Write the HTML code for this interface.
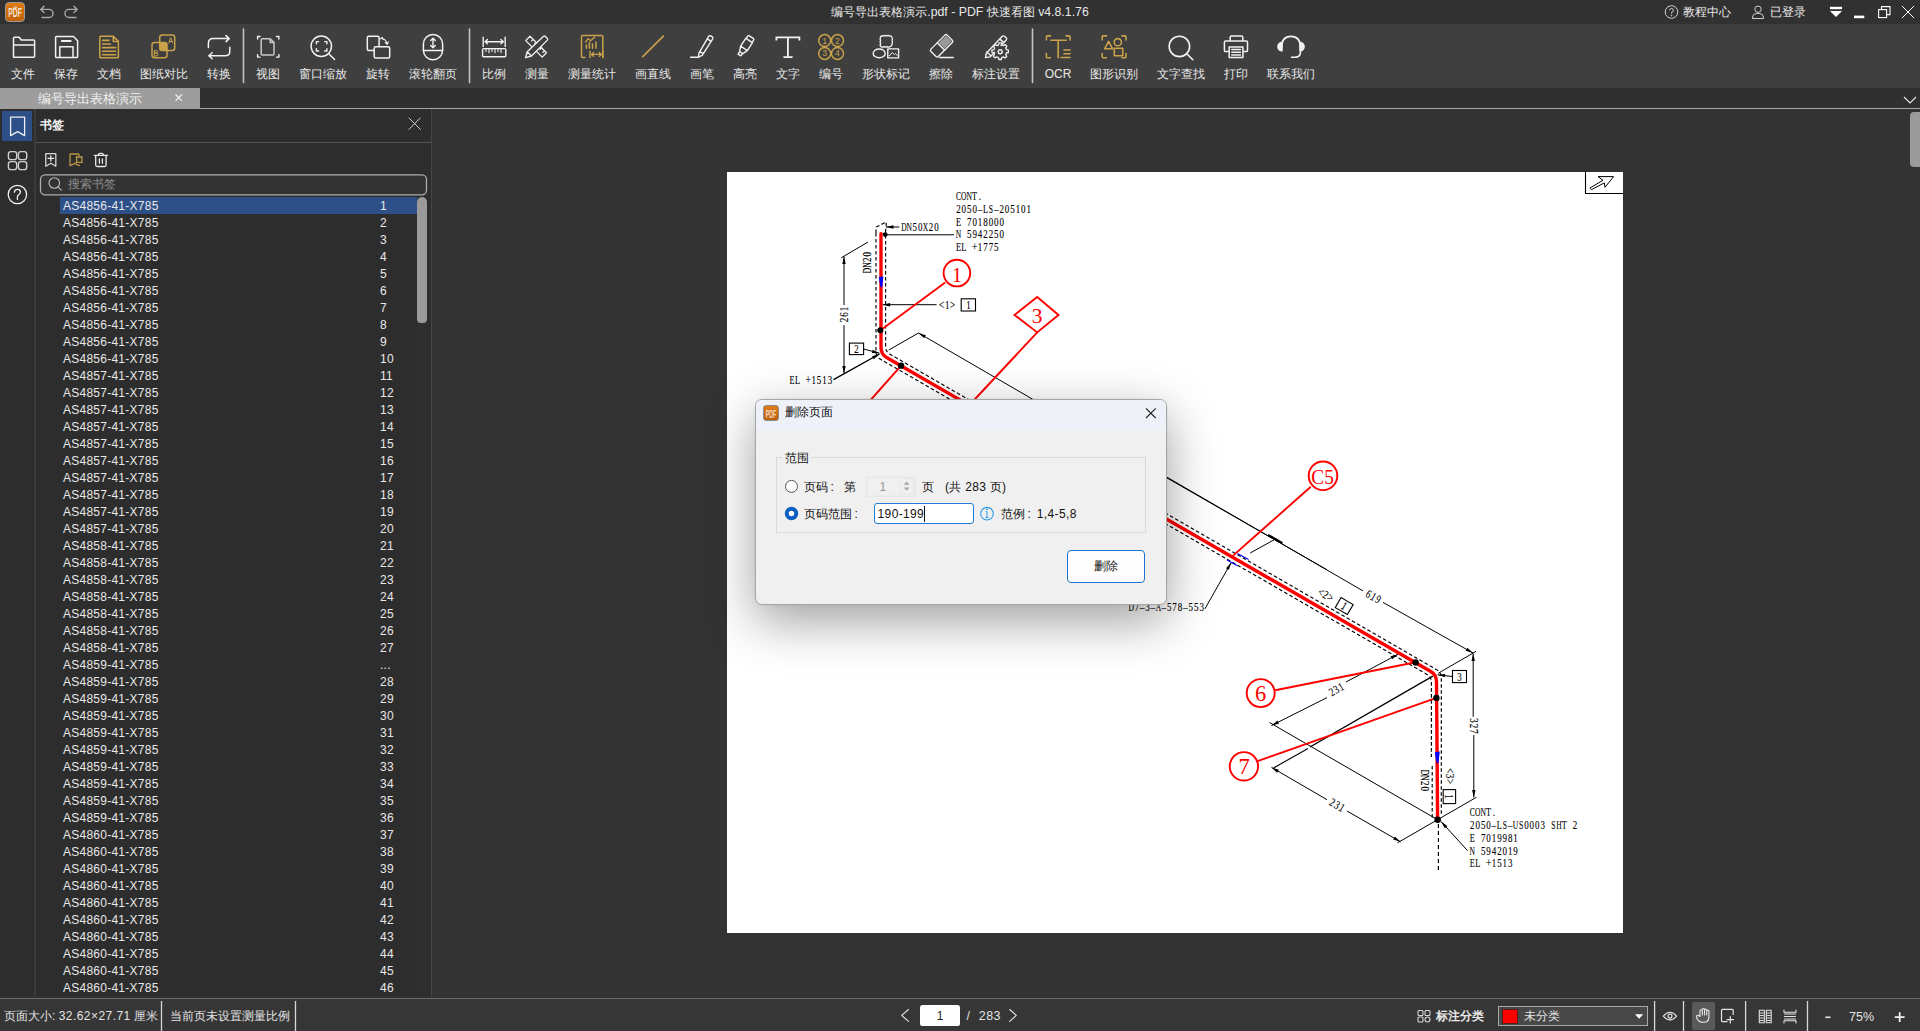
<!DOCTYPE html>
<html><head><meta charset="utf-8">
<style>
*{box-sizing:border-box;margin:0;padding:0}
html,body{width:1920px;height:1031px;overflow:hidden;background:#333333;font-family:"Liberation Sans",sans-serif;color:#e6e6e6}
.a{position:absolute}
#title{left:0;top:0;width:1920px;height:24px;background:#313131}
#tb{left:0;top:24px;width:1920px;height:64px;background:#3f3f3f}
#tabbar{left:0;top:88px;width:1920px;height:20px;background:#303030}
#tabline{left:0;top:108px;width:1920px;height:1px;background:#a8a8a8}
#rail{left:0;top:109px;width:34px;height:887px;background:#2d2d2d}
#railsep{left:34px;top:109px;width:2px;height:887px;background:#3a3a3a}
#panel{left:36px;top:109px;width:395px;height:887px;background:#2d2d2d}
#panelsep{left:431px;top:109px;width:1px;height:887px;background:#454545}
#main{left:432px;top:109px;width:1488px;height:889px;background:#333333}
#status{left:0;top:998px;width:1920px;height:33px;background:#363636;border-top:1px solid #686868}
.lbl{font-size:12px;line-height:14px;top:67px;white-space:nowrap;text-align:center;color:#e8e8e8}
.bm{font-size:12px;line-height:17px;height:17px;left:63px;letter-spacing:0.25px;padding-top:1px;white-space:nowrap;color:#e8e8e8}
.bn{font-size:12px;line-height:17px;height:17px;left:380px;letter-spacing:0.25px;padding-top:1px;white-space:nowrap;color:#e8e8e8}
</style></head><body>
<div id="title" class="a"></div>
<div id="tb" class="a"></div>
<div id="tabbar" class="a"></div>
<div id="tabline" class="a"></div>
<div id="rail" class="a"></div>
<div id="railsep" class="a"></div>
<div id="panel" class="a"></div>
<div id="panelsep" class="a"></div>
<div id="main" class="a"></div>
<div class="a" style="left:0;top:996px;width:432px;height:2px;background:#323232"></div>
<div id="status" class="a"></div>
<div class="a" style="left:5px;top:2px;width:20px;height:20px;border-radius:4px;background:linear-gradient(#e07a10,#c0600a);border:1px solid #9a9a9a"></div>
<svg class="a" style="left:5px;top:2px" width="20" height="20" viewBox="0 0 20 20"><text x="10.1" y="14.9" text-anchor="middle" font-family="Liberation Sans,sans-serif" font-weight="bold" font-size="12.5" textLength="13.6" lengthAdjust="spacingAndGlyphs" fill="#f2e4d6">PDF</text><path d="M8.6 5.6 Q10.3 4.4 12 5.6" stroke="#e8d8c8" stroke-width="1.1" fill="none"/></svg>
<svg class="a" style="left:36px;top:3px" width="48" height="18" viewBox="36 3 48 18" fill="none" stroke="#a9a9a9" stroke-width="1.4" stroke-linecap="round">
<path d="M44 6.2 L40.8 9.4 L44 12.4 M41 9.4 H49 A4 4 0 0 1 49 17.5 H42"/>
<path d="M74 6.2 L77.2 9.4 L74 12.4 M77 9.4 H69 A4 4 0 0 0 69 17.5 H76"/>
</svg>
<div class="a" id="ttl" style="left:760px;top:4px;width:400px;text-align:center;font-size:12.3px;line-height:16px;color:#e8e8e8;white-space:nowrap">编号导出表格演示.pdf - PDF 快速看图 v4.8.1.76</div>
<svg class="a" style="left:1664px;top:4px" width="16" height="16" viewBox="0 0 16 16" fill="none" stroke="#cfcfcf" stroke-width="1"><circle cx="7.5" cy="8" r="6.3"/><path d="M5.6 6.3 A1.9 1.9 0 1 1 7.5 8.3 V9.6" /><circle cx="7.5" cy="11.6" r="0.4" fill="#cfcfcf"/></svg>
<div class="a" style="left:1683px;top:4px;font-size:12px;line-height:16px;color:#e8e8e8;white-space:nowrap">教程中心</div>
<svg class="a" style="left:1750px;top:4px" width="16" height="16" viewBox="0 0 16 16" fill="none" stroke="#cfcfcf" stroke-width="1"><circle cx="8" cy="5.2" r="3.2"/><path d="M2.5 14.5 V13 A4 4 0 0 1 6.5 9.5 H9.5 A4 4 0 0 1 13.5 13 V14.5 Z"/></svg>
<div class="a" style="left:1770px;top:4px;font-size:12px;line-height:16px;color:#e8e8e8;white-space:nowrap">已登录</div>
<svg class="a" style="left:1826px;top:0" width="94" height="24" viewBox="1826 0 94 24">
<rect x="1830" y="6.8" width="12" height="2.4" fill="#fff"/>
<path d="M1830 11 H1842 L1836 17 Z" fill="#fff"/>
<rect x="1854" y="15.6" width="10.3" height="2.6" fill="#fff"/>
<g fill="none" stroke="#fff" stroke-width="1.1"><path d="M1881.5 9 V6.6 H1890 V14.6 H1887"/><rect x="1878.6" y="9.6" width="8" height="8"/></g>
<path d="M1902 6 L1914 18 M1914 6 L1902 18" stroke="#fff" stroke-width="1"/>
</svg>
<svg class="a" style="left:0;top:24px" width="1400" height="64" viewBox="0 24 1400 64" fill="none" stroke="#f2f2f2" stroke-width="1.5" stroke-linejoin="round" stroke-linecap="round">
<g stroke="#c4c4c4" stroke-width="1.6"><path d="M243.5 29 V82.5 M469.5 29 V82.5 M1032.5 29 V82.5"/></g>
<!-- folder -->
<path d="M13.5 57.2 V38.3 Q13.5 37.3 14.5 37.3 H19.2 L21.2 40 H33.5 Q34.6 40 34.6 41 V56.2 Q34.6 57.2 33.5 57.2 H14.5 Q13.5 57.2 13.5 56.2 Z M13.5 45 H34.6"/>
<!-- save -->
<path d="M55.6 37.5 Q55.6 36.6 56.5 36.6 H73.5 L77.6 40.8 V56.7 Q77.6 57.6 76.7 57.6 H56.5 Q55.6 57.6 55.6 56.7 Z M59.8 57.6 V46.8 H73 V57.6"/>
<path d="M61.8 41 H70.7" stroke-width="2"/>
<!-- doc gold -->
<g stroke="#c9a24a"><path d="M99.8 37.2 Q99.8 36.3 100.7 36.3 H113.3 L118.4 41.4 V56.9 Q118.4 57.8 117.5 57.8 H100.7 Q99.8 57.8 99.8 56.9 Z M113.3 36.3 V41.4 H118.4"/>
<path d="M102.6 40.4 H109 M102.6 44 H110.5 M102.6 47.6 H115.6 M102.6 51.2 H115.6 M102.6 54.7 H115.6" stroke-width="1.6"/>
<!-- compare -->
<rect x="159.7" y="35" width="15" height="15.4" rx="2.5"/>
<rect x="152" y="42.6" width="15" height="15.2" rx="2.5"/>
<rect x="159.7" y="42.6" width="7.3" height="7.8" fill="#c9a24a" stroke="none"/>
<path d="M168.8 43 L170.7 37.8 L172.6 43 M169.4 41.5 H172" stroke-width="1"/>
<path d="M154.3 56 V50.5 H156 Q157.6 50.5 157.6 51.8 Q157.6 53.1 156 53.1 H154.3 H156.2 Q158 53.1 158 54.6 Q158 56 156.2 56 Z" stroke-width="1"/>
<!-- stats -->
<path d="M585 57.5 H582.5 Q581.5 57.5 581.5 56.5 V36.5 Q581.5 35.5 582.5 35.5 H601.8 Q602.8 35.5 602.8 36.5 V57.5"/>
<path d="M585.5 42 L588.3 38.6 L590.5 40.8 L594.8 37" stroke-width="1.3"/>
<path d="M586.4 45 V48.2 M589.4 42.6 V48.2 M592.5 44 V48.2 M596 42 V48.2" stroke-width="1.5"/>
<path d="M590 51.2 V57.6 M602.8 51.2 V57.6 M591.5 54.4 H601.3 M593.5 52.5 L591.5 54.4 L593.5 56.3 M599.3 52.5 L601.3 54.4 L599.3 56.3" stroke-width="1.4"/>
<!-- line -->
<path d="M642.8 56.6 L663.3 36.1" stroke-width="1.7"/>
</g>
<!-- convert -->
<path d="M208.4 47.5 V43.4 Q208.4 38.6 213.2 38.6 H229 M226 35.6 L229.2 38.6 L226 41.6 M229.8 47.2 V51.2 Q229.8 55.8 225 55.8 H209 M212.2 52.8 L208.8 55.8 L212.2 58.8" stroke-width="1.5"/>
<!-- view -->
<path d="M260 36.5 H257.6 V39 M276.5 36.5 H278.9 V39 M257.6 54.6 V57.1 H260 M278.9 54.6 V57.1 H276.5" stroke-width="1.4"/>
<path d="M261.2 39.8 Q261.2 38.8 262.2 38.8 H270.2 L274 42.6 V54 Q274 55 273 55 H262.2 Q261.2 55 261.2 54 Z M270.2 38.8 V42.6 H274" stroke="#c8c8c8" stroke-width="1.5"/>
<!-- zoom window -->
<circle cx="321.3" cy="46.3" r="10.2" stroke-width="1.5"/>
<path d="M328.7 53.7 L334.6 59.5" stroke-width="1.5"/>
<path d="M316.4 43.8 V41.6 H318.6 M324.7 41.6 H326.9 V43.8 M316.4 48.8 V51 H318.6 M324.7 51 H326.9 V48.8" stroke-width="1.4"/>
<!-- rotate -->
<rect x="367.3" y="36.3" width="11.8" height="14.3" rx="1.5" stroke-width="1.5"/>
<rect x="374.2" y="46.7" width="15.5" height="11.3" rx="1.5" stroke-width="1.5" fill="#3f3f3f"/>
<path d="M381.8 38.2 Q385.6 39 387 43.4 M380.6 38.8 L382.2 37.3 L383.1 39.5 M385.3 42.6 L387.2 44.3 L388.3 41.9" stroke-width="1.1"/>
<!-- mouse -->
<rect x="423.4" y="34.4" width="19.2" height="25.4" rx="9.6" stroke-width="1.5"/>
<path d="M423.4 50.5 H442.6" stroke-width="1.5"/>
<path d="M433 38.6 V47.4 M430.7 40.6 L433 38.3 L435.3 40.6 M430.7 45.4 L433 47.7 L435.3 45.4" stroke-width="1.4"/>
<!-- scale -->
<path d="M483.2 37.3 V46.4 M505.2 37.3 V46.4 M485 41.7 H503.4 M487.4 39.6 L485.2 41.7 L487.4 43.8 M501 39.6 L503.2 41.7 L501 43.8" stroke-width="1.4"/>
<rect x="482.6" y="48.6" width="23.2" height="8.2" rx="1" stroke-width="1.4"/>
<path d="M486 48.6 V51.5 M489 48.6 V52.8 M492 48.6 V51.5 M495 48.6 V52.8 M498 48.6 V51.5 M501 48.6 V52.8" stroke-width="1.1"/>
<!-- measure -->
<path d="M530 36.3 L525.7 40.6 L542.2 57.1 L546.5 52.8 Z M531.6 40.9 L533.2 39.3 M534.6 43.9 L536.2 42.3 M540 49.3 L541.6 47.7 M543 52.3 L544.6 50.7" stroke-width="1.3"/>
<path d="M543.6 36.3 Q544.4 35.6 545.2 36.3 L547.4 38.5 Q548.1 39.3 547.4 40.1 L531.5 56 L525.5 57.7 L527.2 51.7 Z M527.2 51.7 L531.5 56" stroke-width="1.3" fill="#3f3f3f"/>
<!-- pen -->
<path d="M708.8 36.2 Q710 35.4 711.2 36.1 L712.3 36.8 Q713.3 37.6 712.7 38.8 L702.2 55.4 L698.6 57.2 L698.8 53.3 Z M699.6 51.6 L703.3 53.7 M707.2 38.9 L710.9 41.1 M690.6 57.3 H698.6" stroke-width="1.4"/>
<!-- highlighter -->
<g transform="translate(745.4 46.2) rotate(33) translate(0 -10.8)" stroke-width="1.4"><rect x="-3.6" y="0" width="7.2" height="4" rx="1.2"/><path d="M-4 4 V13.4 L-1.9 18.4 H1.9 L4 13.4 V4 M-4 13.4 H4 M-1.9 18.4 V21.4 H1.3 L1.9 18.4"/></g>
<!-- T -->
<path d="M776.4 40.6 V37.3 H799.4 V40.6 M787.9 37.3 V57.2 M783.4 57.2 H792.6" stroke-width="1.8" stroke-linejoin="miter" stroke-linecap="butt"/>
<!-- numbers gold -->
<g stroke="#c9a24a" stroke-width="1.5"><circle cx="824.7" cy="40.6" r="6"/><circle cx="837.5" cy="40.6" r="6"/><circle cx="824.7" cy="53.4" r="6"/><circle cx="837.5" cy="53.4" r="6"/></g>
<g fill="#c9a24a" stroke="none" font-family="Liberation Sans,sans-serif" font-size="8.6" text-anchor="middle"><text x="824.7" y="43.6">1</text><text x="837.5" y="43.6">2</text><text x="824.7" y="56.4">3</text><text x="837.5" y="56.4">4</text></g>
<!-- shapes -->
<path d="M880.5 37 Q882 35.2 883.5 36 Q885 35 886.5 36 Q888 35 889.5 36 Q891.5 35.5 892 37.5 Q893 39 892 40.5 Q893 42 892 43.5 Q892.5 46 890 46.6 Q888.5 47.5 887 46.6 Q885.5 47.5 884 46.6 Q882.5 47.5 881 46.6 Q879.5 45.5 880.6 43.5 Q879.5 42 880.6 40.5 Q879.5 39 880.5 37 Z" stroke-width="1.3"/>
<ellipse cx="879.2" cy="53.4" rx="6" ry="4.4" stroke-width="1.4"/>
<rect x="887.8" y="48.9" width="10.8" height="9" stroke-width="1.4"/>
<path d="M889.5 55.8 L892.2 52.5 L894.4 54.6 L895.5 53.5 L897.2 55.5" stroke-width="1"/>
<!-- eraser -->
<g transform="translate(941.6 45.8) rotate(-45) translate(-11.5 -5.2)" stroke-width="1.4"><rect x="0" y="0" width="23" height="10.4" rx="1.6"/><path d="M10.5 0 V10.4"/><rect x="11.6" y="1.2" width="10.2" height="8" fill="#9a9a9a" stroke="none"/></g>
<path d="M939.5 57.4 H953.2" stroke-width="1.5"/>
<!-- annot settings -->
<path d="M1002.3 36.3 Q1003.4 35.4 1004.5 36.3 L1006.2 37.8 Q1007.2 38.8 1006.3 39.9 L1001 45.5 M994.6 52.2 L990 56.9 L985.5 57.6 L986.3 53.2 L1002.3 36.3 M999.6 38.9 L1003.6 42.4 M986.8 52 L990.4 55.3" stroke-width="1.4"/>
<circle cx="1000.2" cy="51.8" r="2" stroke-width="1.4"/>
<path d="M999 45.4 H1001.4 L1001.9 47.3 L1003.6 48.1 L1005.2 47 L1006.9 48.7 L1005.8 50.4 L1006.5 52.2 L1008.4 52.7 V55 L1006.4 55.5 L1005.7 57.2 L1006.8 58.8 L1005.1 60.5 L1003.4 59.4 L1001.7 60.1 L1001.3 62 H998.9 L998.4 60 L996.8 59.3 L995.1 60.4 L993.4 58.7 L994.5 57 L993.8 55.4 L991.9 54.9 V52.6 L993.8 52.2 L994.6 50.5 L993.5 48.8 L995.2 47.1 L996.9 48.2 L998.5 47.4 Z" stroke-width="1.3" transform="translate(0 -2.5) scale(1) "/>
<!-- OCR gold -->
<g stroke="#c9a24a" stroke-width="1.6">
<path d="M1050.5 35.9 H1047.5 Q1046.4 35.9 1046.4 37 V40 M1066 35.9 H1069 Q1070 35.9 1070 37 V40 M1046.4 53.5 V56.8 Q1046.4 57.8 1047.5 57.8 H1050.5"/>
<path d="M1050.8 40.3 H1066.2 M1058.2 40.3 V57.8 M1064 50 H1070 M1064 53.7 H1070 M1061 57.5 H1070"/>
<!-- shape recog -->
<path d="M1106.5 35.9 H1103.2 Q1102.2 35.9 1102.2 37 V40 M1122 35.9 H1125 Q1126 35.9 1126 37 V40 M1102.2 53.5 V56.8 Q1102.2 57.8 1103.2 57.8 H1106.5 M1122 57.8 H1125 Q1126 57.8 1126 56.8 V53.5"/>
<circle cx="1117.8" cy="42.2" r="3.6"/>
<path d="M1108.6 41.4 L1112.6 48.8 H1104.6 Z"/>
<rect x="1114.3" y="48.2" width="8.4" height="7.6"/>
</g>
<!-- search -->
<circle cx="1179.4" cy="46.4" r="10.2" stroke-width="1.6"/>
<path d="M1186.8 53.8 L1192.8 59.7" stroke-width="1.6"/>
<!-- print -->
<path d="M1230.2 41 V37.3 Q1230.2 36.1 1231.4 36.1 H1241.6 Q1242.8 36.1 1242.8 37.3 V41 M1228.5 51.6 H1225.6 Q1224.4 51.6 1224.4 50.4 V42.3 Q1224.4 41 1225.7 41 H1246.2 Q1247.5 41 1247.5 42.3 V50.4 Q1247.5 51.6 1246.3 51.6 H1243.1 M1229.2 47 H1242.9 V57.6 H1229.2 Z M1231.8 49.5 H1240.4 M1231.8 52.3 H1240.4 M1231.8 55 H1240.4" stroke-width="1.5"/>
<!-- headset -->
<path d="M1281.5 48 Q1281.5 36.4 1291 36.4 Q1300.5 36.4 1300.5 48 V52 Q1300.5 57.2 1295 57.2 H1291.5" stroke-width="1.6"/>
<path d="M1282 42.6 A4 4 0 0 0 1282 50.8 Z M1300 42.6 A4 4 0 0 1 1300 50.8 Z" fill="#f2f2f2"/>
</svg>
<div class="a lbl" style="left:3px;width:40px">文件</div>
<div class="a lbl" style="left:46px;width:40px">保存</div>
<div class="a lbl" style="left:89px;width:40px">文档</div>
<div class="a lbl" style="left:134px;width:60px">图纸对比</div>
<div class="a lbl" style="left:199px;width:40px">转换</div>
<div class="a lbl" style="left:248px;width:40px">视图</div>
<div class="a lbl" style="left:293px;width:60px">窗口缩放</div>
<div class="a lbl" style="left:358px;width:40px">旋转</div>
<div class="a lbl" style="left:403px;width:60px">滚轮翻页</div>
<div class="a lbl" style="left:474px;width:40px">比例</div>
<div class="a lbl" style="left:517px;width:40px">测量</div>
<div class="a lbl" style="left:562px;width:60px">测量统计</div>
<div class="a lbl" style="left:623px;width:60px">画直线</div>
<div class="a lbl" style="left:682px;width:40px">画笔</div>
<div class="a lbl" style="left:725px;width:40px">高亮</div>
<div class="a lbl" style="left:768px;width:40px">文字</div>
<div class="a lbl" style="left:811px;width:40px">编号</div>
<div class="a lbl" style="left:856px;width:60px">形状标记</div>
<div class="a lbl" style="left:921px;width:40px">擦除</div>
<div class="a lbl" style="left:966px;width:60px">标注设置</div>
<div class="a lbl" style="left:1038px;width:40px">OCR</div>
<div class="a lbl" style="left:1084px;width:60px">图形识别</div>
<div class="a lbl" style="left:1151px;width:60px">文字查找</div>
<div class="a lbl" style="left:1216px;width:40px">打印</div>
<div class="a lbl" style="left:1261px;width:60px">联系我们</div>
<div class="a" style="left:0;top:88px;width:200px;height:21px;background:#9d9d9d"></div>
<div class="a" style="left:38px;top:91px;font-size:13px;line-height:15px;color:#f0f0f0;white-space:nowrap">编号导出表格演示</div>
<svg class="a" style="left:174px;top:93px" width="10" height="10" viewBox="0 0 10 10"><path d="M1.5 1.5 L7.8 7.8 M7.8 1.5 L1.5 7.8" stroke="#f4f4f4" stroke-width="1.1"/></svg>
<svg class="a" style="left:1900px;top:94px" width="20" height="14" viewBox="1900 94 20 14"><path d="M1904 97 L1910 103 L1916 97" fill="none" stroke="#e8e8e8" stroke-width="1.1"/></svg>
<div class="a" style="left:2px;top:111px;width:30px;height:30px;background:#2d5089"></div>
<svg class="a" style="left:0;top:109px" width="432" height="100" viewBox="0 109 432 100" fill="none" stroke="#f0f0f0" stroke-width="1.4" stroke-linejoin="round">
<path d="M10.6 117.2 H24.6 V135.6 L17.6 131.6 L10.6 135.6 Z" stroke-width="1.3"/>
<g stroke="#cfcfcf" stroke-width="1.4"><rect x="8.4" y="151.6" width="8.3" height="8" rx="2.4"/><rect x="18.4" y="151.6" width="8.3" height="8" rx="2.4"/><rect x="8.4" y="161.6" width="8.3" height="8" rx="2.4"/><rect x="18.4" y="161.6" width="8.3" height="8" rx="2.4"/></g>
<circle cx="17.4" cy="194.5" r="9.2" stroke="#f0f0f0" stroke-width="1.3"/>
<path d="M14.4 192.2 Q14.6 189.3 17.4 189.3 Q20.3 189.3 20.4 192 Q20.4 193.6 18.4 195 Q17.4 195.8 17.4 197 V199.4" stroke-width="1.3" stroke-linecap="round"/>
<path d="M408.7 117.7 L420.6 129.6 M420.6 117.7 L408.7 129.6" stroke="#cfcfcf" stroke-width="1"/>
<path d="M36 142.5 H431" stroke="#555" stroke-width="1"/>
<path d="M45.8 153.7 H55.8 V166.2 L50.8 163.2 L45.8 166.2 Z" stroke="#d8d8d8" stroke-width="1.3"/>
<path d="M47.6 158.4 H54 M50.8 155.3 V161.5" stroke="#f0f0f0" stroke-width="1.2"/>
<g stroke="#b8964a" stroke-width="1.3" stroke-linejoin="round"><path d="M79 156.3 V154.8 Q79 154 78.2 154 H70.8 Q70 154 70 154.8 V165.7 L75 163.4 L79 165.7 V164.5"/><rect x="76.6" y="157" width="5.2" height="5.4"/><path d="M75.8 156.5 L76.8 157.5 M82.4 156.5 L81.4 157.5 M75.8 162.9 L76.8 161.9 M82.4 162.9 L81.4 161.9" stroke-width="1.1"/></g>
<path d="M94.2 155.3 H107.6 M98.3 155 Q98.3 153.4 100 153.4 H101.7 Q103.4 153.4 103.4 155 M95.7 155.8 V165 Q95.7 166.5 97.2 166.5 H104.6 Q106.1 166.5 106.1 165 V155.8 M99.4 158.8 V163.2 M102.4 158.8 V163.2" stroke="#e8e8e8" stroke-width="1.3" stroke-linecap="round"/>
<rect x="40.5" y="174.8" width="386" height="20" rx="4.5" stroke="#adadad" stroke-width="1.3" fill="#333"/>
<circle cx="54.3" cy="183" r="5.3" stroke="#bdbdbd" stroke-width="1.1"/>
<path d="M58.1 186.8 L61.5 190.4" stroke="#bdbdbd" stroke-width="1.1"/>
</svg>
<div class="a" style="left:40px;top:117.5px;font-size:12px;line-height:15px;font-weight:bold;color:#f4f4f4">书签</div>
<div class="a" style="left:68px;top:177px;font-size:12px;line-height:15px;color:#8e8e8e">搜索书签</div>
<div class="a" style="left:60px;top:197px;width:357px;height:17px;background:#2d5089"></div>
<div class="a" style="left:417px;top:197px;width:10px;height:126px;border-radius:5px 5px 4px 4px;background:#9a9a9a"></div>
<div class="a" style="left:417px;top:323px;width:10px;height:669px;background:#2f2f2f"></div>
<div class="a bm" style="top:197px">AS4856-41-X785</div><div class="a bn" style="top:197px">1</div>
<div class="a bm" style="top:214px">AS4856-41-X785</div><div class="a bn" style="top:214px">2</div>
<div class="a bm" style="top:231px">AS4856-41-X785</div><div class="a bn" style="top:231px">3</div>
<div class="a bm" style="top:248px">AS4856-41-X785</div><div class="a bn" style="top:248px">4</div>
<div class="a bm" style="top:265px">AS4856-41-X785</div><div class="a bn" style="top:265px">5</div>
<div class="a bm" style="top:282px">AS4856-41-X785</div><div class="a bn" style="top:282px">6</div>
<div class="a bm" style="top:299px">AS4856-41-X785</div><div class="a bn" style="top:299px">7</div>
<div class="a bm" style="top:316px">AS4856-41-X785</div><div class="a bn" style="top:316px">8</div>
<div class="a bm" style="top:333px">AS4856-41-X785</div><div class="a bn" style="top:333px">9</div>
<div class="a bm" style="top:350px">AS4856-41-X785</div><div class="a bn" style="top:350px">10</div>
<div class="a bm" style="top:367px">AS4857-41-X785</div><div class="a bn" style="top:367px">11</div>
<div class="a bm" style="top:384px">AS4857-41-X785</div><div class="a bn" style="top:384px">12</div>
<div class="a bm" style="top:401px">AS4857-41-X785</div><div class="a bn" style="top:401px">13</div>
<div class="a bm" style="top:418px">AS4857-41-X785</div><div class="a bn" style="top:418px">14</div>
<div class="a bm" style="top:435px">AS4857-41-X785</div><div class="a bn" style="top:435px">15</div>
<div class="a bm" style="top:452px">AS4857-41-X785</div><div class="a bn" style="top:452px">16</div>
<div class="a bm" style="top:469px">AS4857-41-X785</div><div class="a bn" style="top:469px">17</div>
<div class="a bm" style="top:486px">AS4857-41-X785</div><div class="a bn" style="top:486px">18</div>
<div class="a bm" style="top:503px">AS4857-41-X785</div><div class="a bn" style="top:503px">19</div>
<div class="a bm" style="top:520px">AS4857-41-X785</div><div class="a bn" style="top:520px">20</div>
<div class="a bm" style="top:537px">AS4858-41-X785</div><div class="a bn" style="top:537px">21</div>
<div class="a bm" style="top:554px">AS4858-41-X785</div><div class="a bn" style="top:554px">22</div>
<div class="a bm" style="top:571px">AS4858-41-X785</div><div class="a bn" style="top:571px">23</div>
<div class="a bm" style="top:588px">AS4858-41-X785</div><div class="a bn" style="top:588px">24</div>
<div class="a bm" style="top:605px">AS4858-41-X785</div><div class="a bn" style="top:605px">25</div>
<div class="a bm" style="top:622px">AS4858-41-X785</div><div class="a bn" style="top:622px">26</div>
<div class="a bm" style="top:639px">AS4858-41-X785</div><div class="a bn" style="top:639px">27</div>
<div class="a bm" style="top:656px">AS4859-41-X785</div><div class="a bn" style="top:656px">...</div>
<div class="a bm" style="top:673px">AS4859-41-X785</div><div class="a bn" style="top:673px">28</div>
<div class="a bm" style="top:690px">AS4859-41-X785</div><div class="a bn" style="top:690px">29</div>
<div class="a bm" style="top:707px">AS4859-41-X785</div><div class="a bn" style="top:707px">30</div>
<div class="a bm" style="top:724px">AS4859-41-X785</div><div class="a bn" style="top:724px">31</div>
<div class="a bm" style="top:741px">AS4859-41-X785</div><div class="a bn" style="top:741px">32</div>
<div class="a bm" style="top:758px">AS4859-41-X785</div><div class="a bn" style="top:758px">33</div>
<div class="a bm" style="top:775px">AS4859-41-X785</div><div class="a bn" style="top:775px">34</div>
<div class="a bm" style="top:792px">AS4859-41-X785</div><div class="a bn" style="top:792px">35</div>
<div class="a bm" style="top:809px">AS4859-41-X785</div><div class="a bn" style="top:809px">36</div>
<div class="a bm" style="top:826px">AS4860-41-X785</div><div class="a bn" style="top:826px">37</div>
<div class="a bm" style="top:843px">AS4860-41-X785</div><div class="a bn" style="top:843px">38</div>
<div class="a bm" style="top:860px">AS4860-41-X785</div><div class="a bn" style="top:860px">39</div>
<div class="a bm" style="top:877px">AS4860-41-X785</div><div class="a bn" style="top:877px">40</div>
<div class="a bm" style="top:894px">AS4860-41-X785</div><div class="a bn" style="top:894px">41</div>
<div class="a bm" style="top:911px">AS4860-41-X785</div><div class="a bn" style="top:911px">42</div>
<div class="a bm" style="top:928px">AS4860-41-X785</div><div class="a bn" style="top:928px">43</div>
<div class="a bm" style="top:945px">AS4860-41-X785</div><div class="a bn" style="top:945px">44</div>
<div class="a bm" style="top:962px">AS4860-41-X785</div><div class="a bn" style="top:962px">45</div>
<div class="a bm" style="top:979px">AS4860-41-X785</div><div class="a bn" style="top:979px">46</div>
<div class="a" style="left:727px;top:172px;width:896px;height:761px;background:#fff"></div>
<div class="a" style="left:1910px;top:112px;width:10px;height:55px;background:#9b9b9b;border-radius:4px 0 0 4px"></div>
<svg class="a" style="left:727px;top:172px" width="896" height="761" viewBox="727 172 896 761">

<!-- north arrow box -->
<path d="M1585.5 172 V193.5 H1623" fill="none" stroke="#000" stroke-width="1.1"/>
<path d="M1590.5 199 L1590.5 199" />
<g fill="none" stroke="#000" stroke-width="1">
<path d="M1598 176.6 H1613.6 L1605 187.3 L1604.3 182.9 L1591.6 189.6 Q1590 189.2 1590.2 187.8 L1603 180.3 L1598 176.6"/>
</g>
<!-- dashed pipe outlines -->
<g fill="none" stroke="#000" stroke-width="1.15" stroke-dasharray="3.6 2.4">
<path d="M885.6 229 V346.5 Q885.6 351.6 890 354.2 L1436.3 669.5 Q1441.3 672.3 1441.3 677.5 V816"/>
<path d="M876 233 V352 Q876 356.7 880.5 359.3 L1427 674.4 Q1431.4 677.1 1431.4 682 V757 M1432.2 766 V817.5"/>
<path d="M876 233 V227.2 L886.2 222 V229"/>
<path d="M1438.4 824 V871" stroke-width="1.2" stroke-dasharray="4 3"/>
</g>
<!-- black lines -->
<g fill="none" stroke="#000" stroke-width="1">
<path d="M884 234.8 H954"/>
<path d="M899.3 227 H886"/><path d="M886.00 227.00 L893.50 225.30 L893.50 228.70 Z" fill="#000" stroke="none"/>
<path d="M844 305 V256.5"/><path d="M844.00 256.50 L845.70 264.00 L842.30 264.00 Z" fill="#000" stroke="none"/>
<path d="M844 325 V373.5"/><path d="M844.00 373.50 L842.30 366.00 L845.70 366.00 Z" fill="#000" stroke="none"/>
<path d="M841.2 257.8 L867.9 242.1"/>
<path d="M833.5 379.6 L879.5 354" stroke-width="1.4"/><path d="M879.50 354.00 L873.77 359.13 L872.12 356.16 Z" fill="#000" stroke="none"/>
<path d="M936.6 304.7 H882.6"/><path d="M882.60 304.70 L890.10 303.00 L890.10 306.40 Z" fill="#000" stroke="none"/>
<rect x="961.2" y="298.8" width="14.3" height="12.2" stroke-width="1.1"/>
<rect x="849.4" y="343.1" width="14.2" height="11.5" stroke-width="1.1"/>
<path d="M863.6 349 L879.5 353.2"/><path d="M879.50 353.20 L871.81 352.93 L872.68 349.64 Z" fill="#000" stroke="none"/>
<path d="M888.8 350 L918.5 333"/>
<path d="M1363 590.9 L918.5 333"/><path d="M918.50 333.00 L925.84 335.29 L924.13 338.23 Z" fill="#000" stroke="none"/>
<path d="M1383 602.4 L1473 653"/><path d="M1473.00 653.00 L1465.63 650.81 L1467.30 647.84 Z" fill="#000" stroke="none"/>
<path d="M1438.3 673.2 L1476 651.4"/>
<path d="M1473.2 716.8 V653.6"/><path d="M1473.20 653.60 L1474.90 661.10 L1471.50 661.10 Z" fill="#000" stroke="none"/>
<path d="M1473.8 735.1 V797.4"/><path d="M1473.80 797.40 L1472.10 789.90 L1475.50 789.90 Z" fill="#000" stroke="none"/>
<rect x="1452.5" y="670.5" width="14" height="12.1" stroke-width="1.1"/>
<path d="M1452.4 676.5 L1437.6 674.8"/><path d="M1437.60 674.80 L1445.25 673.97 L1444.86 677.34 Z" fill="#000" stroke="none"/>
<path d="M1432.8 676.1 L1310 747" stroke-width="1.4"/>
<path d="M1308 748.5 L1273.6 767.9" stroke-width="1.1"/>
<path d="M1327 697.6 L1271.5 725.5"/><path d="M1271.50 725.50 L1277.44 720.61 L1278.96 723.65 Z" fill="#000" stroke="none"/>
<path d="M1346 682 L1398 654.3"/><path d="M1398.00 654.30 L1392.18 659.33 L1390.58 656.33 Z" fill="#000" stroke="none"/>
<path d="M1269.5 722.5 L1437.7 819.8"/>
<path d="M1327 799.7 L1271.5 767.4"/><path d="M1271.50 767.40 L1278.84 769.70 L1277.13 772.64 Z" fill="#000" stroke="none"/>
<path d="M1347 811 L1400.5 841.8"/><path d="M1400.50 841.80 L1393.15 839.53 L1394.85 836.58 Z" fill="#000" stroke="none"/>
<path d="M1397.5 842.8 L1476.4 797.3"/>
<path d="M1467.6 850.7 L1441 821.5"/><path d="M1441.00 821.50 L1447.31 825.90 L1444.79 828.19 Z" fill="#000" stroke="none"/>
<path d="M1250.2 553 L1276.4 538.5"/>
<path d="M1166 477.4 L1326.5 569.5"/>
<path d="M1268 534.8 L1282.5 543" stroke-width="2"/>
<path d="M1204.9 608.9 L1231.2 562.5"/><path d="M1231.20 562.50 L1228.98 569.86 L1226.02 568.19 Z" fill="#000" stroke="none"/>
</g>
<!-- red pipe -->
<path d="M881 233.6 V347.4 Q881 354.3 887 357.8 L1430.4 671.3 Q1436.5 674.8 1436.5 681.8 L1437.6 819.5" fill="none" stroke="#ff0000" stroke-width="3.4" stroke-linecap="round"/>
<!-- blue markers -->
<g fill="#0000ff" stroke="none">
<path d="M878.8 277 L883.4 276.4 L882.2 287.2 L880.4 287.2 Z"/>
<path d="M1434.8 752.2 L1439.8 751.5 L1438.4 763.2 L1436.6 763.2 Z"/>
</g>
<g stroke="#0000ff" stroke-width="1.1"><path d="M1237.4 553.6 L1248.5 559.4 M1227 560 L1237.4 565.8"/></g>
<!-- red annotations -->
<g fill="none" stroke="#ff0000" stroke-width="1.9">
<circle cx="956.9" cy="273.1" r="13.3"/>
<path d="M945.2 282.4 L880.5 330.2"/>
<path d="M1037.2 296.9 L1058.5 314.9 L1037.2 332.4 L1014.5 314.9 Z"/>
<path d="M1037.2 332.4 L969.5 405"/>
<path d="M901.1 365.7 L860 412"/>
<circle cx="1323" cy="475.8" r="14.3"/>
<path d="M1310.8 486.7 L1232.8 555.9"/>
<circle cx="1260.7" cy="693.1" r="14"/>
<path d="M1275.2 690.3 L1415.6 662.3"/>
<circle cx="1243.9" cy="766.3" r="14.2"/>
<path d="M1257.6 761.2 L1436.4 697.9"/>
</g>
<g fill="#ff0000" font-family="Liberation Serif,serif" text-anchor="middle">
<text x="957" y="281.6" font-size="20">1</text>
<text x="1037.2" y="322.6" font-size="21.5">3</text>
<text x="1322.6" y="483.6" font-size="22" textLength="22.5" lengthAdjust="spacingAndGlyphs">C5</text>
<text x="1260.7" y="701.2" font-size="22.5">6</text>
<text x="1244" y="774.2" font-size="22.5">7</text>
</g>
<!-- dots -->
<g fill="#000"><circle cx="880.3" cy="330.2" r="3"/><circle cx="901.1" cy="365.7" r="3.1"/><circle cx="1415.6" cy="662.4" r="3.2"/><circle cx="1436.4" cy="697.9" r="3.2"/><circle cx="1437.7" cy="819.8" r="3.3"/><circle cx="885.2" cy="234.6" r="2.4"/></g>
<!-- texts -->
<g fill="#000" font-family="Liberation Serif,serif" font-size="11.8" stroke="#000" stroke-width="0.12">
<g transform="translate(955.70 200.00)"><text transform="translate(2.71 0) scale(0.64 1)" text-anchor="middle">C</text><text transform="translate(8.12 0) scale(0.64 1)" text-anchor="middle">O</text><text transform="translate(13.53 0) scale(0.64 1)" text-anchor="middle">N</text><text transform="translate(18.94 0) scale(0.7 1)" text-anchor="middle">T</text><text transform="translate(24.34 0) scale(0.8 1)" text-anchor="middle">.</text></g>
<g transform="translate(955.70 213.20)"><text transform="translate(2.71 0) scale(0.76 1)" text-anchor="middle">2</text><text transform="translate(8.12 0) scale(0.76 1)" text-anchor="middle">0</text><text transform="translate(13.53 0) scale(0.76 1)" text-anchor="middle">5</text><text transform="translate(18.94 0) scale(0.76 1)" text-anchor="middle">0</text><text transform="translate(24.34 0) scale(0.8 1)" text-anchor="middle">&#8211;</text><text transform="translate(29.76 0) scale(0.7 1)" text-anchor="middle">L</text><text transform="translate(35.16 0) scale(0.64 1)" text-anchor="middle">S</text><text transform="translate(40.58 0) scale(0.8 1)" text-anchor="middle">&#8211;</text><text transform="translate(45.98 0) scale(0.76 1)" text-anchor="middle">2</text><text transform="translate(51.39 0) scale(0.76 1)" text-anchor="middle">0</text><text transform="translate(56.80 0) scale(0.76 1)" text-anchor="middle">5</text><text transform="translate(62.22 0) scale(0.76 1)" text-anchor="middle">1</text><text transform="translate(67.62 0) scale(0.76 1)" text-anchor="middle">0</text><text transform="translate(73.03 0) scale(0.76 1)" text-anchor="middle">1</text></g>
<g transform="translate(955.70 225.70)"><text transform="translate(2.71 0) scale(0.7 1)" text-anchor="middle">E</text><text transform="translate(13.53 0) scale(0.76 1)" text-anchor="middle">7</text><text transform="translate(18.94 0) scale(0.76 1)" text-anchor="middle">0</text><text transform="translate(24.34 0) scale(0.76 1)" text-anchor="middle">1</text><text transform="translate(29.76 0) scale(0.76 1)" text-anchor="middle">8</text><text transform="translate(35.16 0) scale(0.76 1)" text-anchor="middle">0</text><text transform="translate(40.58 0) scale(0.76 1)" text-anchor="middle">0</text><text transform="translate(45.98 0) scale(0.76 1)" text-anchor="middle">0</text></g>
<g transform="translate(955.70 238.30)"><text transform="translate(2.71 0) scale(0.64 1)" text-anchor="middle">N</text><text transform="translate(13.53 0) scale(0.76 1)" text-anchor="middle">5</text><text transform="translate(18.94 0) scale(0.76 1)" text-anchor="middle">9</text><text transform="translate(24.34 0) scale(0.76 1)" text-anchor="middle">4</text><text transform="translate(29.76 0) scale(0.76 1)" text-anchor="middle">2</text><text transform="translate(35.16 0) scale(0.76 1)" text-anchor="middle">2</text><text transform="translate(40.58 0) scale(0.76 1)" text-anchor="middle">5</text><text transform="translate(45.98 0) scale(0.76 1)" text-anchor="middle">0</text></g>
<g transform="translate(955.70 250.50)"><text transform="translate(2.71 0) scale(0.7 1)" text-anchor="middle">E</text><text transform="translate(8.12 0) scale(0.7 1)" text-anchor="middle">L</text><text transform="translate(18.94 0) scale(0.8 1)" text-anchor="middle">+</text><text transform="translate(24.34 0) scale(0.76 1)" text-anchor="middle">1</text><text transform="translate(29.76 0) scale(0.76 1)" text-anchor="middle">7</text><text transform="translate(35.16 0) scale(0.76 1)" text-anchor="middle">7</text><text transform="translate(40.58 0) scale(0.76 1)" text-anchor="middle">5</text></g>
<g transform="translate(901.20 230.70)"><text transform="translate(2.71 0) scale(0.64 1)" text-anchor="middle">D</text><text transform="translate(8.12 0) scale(0.64 1)" text-anchor="middle">N</text><text transform="translate(13.53 0) scale(0.76 1)" text-anchor="middle">5</text><text transform="translate(18.94 0) scale(0.76 1)" text-anchor="middle">0</text><text transform="translate(24.34 0) scale(0.64 1)" text-anchor="middle">X</text><text transform="translate(29.76 0) scale(0.76 1)" text-anchor="middle">2</text><text transform="translate(35.16 0) scale(0.76 1)" text-anchor="middle">0</text></g>
<g transform="translate(789.30 383.80)"><text transform="translate(2.71 0) scale(0.7 1)" text-anchor="middle">E</text><text transform="translate(8.12 0) scale(0.7 1)" text-anchor="middle">L</text><text transform="translate(18.94 0) scale(0.8 1)" text-anchor="middle">+</text><text transform="translate(24.34 0) scale(0.76 1)" text-anchor="middle">1</text><text transform="translate(29.76 0) scale(0.76 1)" text-anchor="middle">5</text><text transform="translate(35.16 0) scale(0.76 1)" text-anchor="middle">1</text><text transform="translate(40.58 0) scale(0.76 1)" text-anchor="middle">3</text></g>
<g transform="translate(1128.60 611.30)"><text transform="translate(2.71 0) scale(0.64 1)" text-anchor="middle">D</text><text transform="translate(8.12 0) scale(0.76 1)" text-anchor="middle">7</text><text transform="translate(13.53 0) scale(0.8 1)" text-anchor="middle">&#8211;</text><text transform="translate(18.94 0) scale(0.76 1)" text-anchor="middle">3</text><text transform="translate(24.34 0) scale(0.8 1)" text-anchor="middle">&#8211;</text><text transform="translate(29.76 0) scale(0.64 1)" text-anchor="middle">A</text><text transform="translate(35.16 0) scale(0.8 1)" text-anchor="middle">&#8211;</text><text transform="translate(40.58 0) scale(0.76 1)" text-anchor="middle">5</text><text transform="translate(45.98 0) scale(0.76 1)" text-anchor="middle">7</text><text transform="translate(51.39 0) scale(0.76 1)" text-anchor="middle">8</text><text transform="translate(56.80 0) scale(0.8 1)" text-anchor="middle">&#8211;</text><text transform="translate(62.22 0) scale(0.76 1)" text-anchor="middle">5</text><text transform="translate(67.62 0) scale(0.76 1)" text-anchor="middle">5</text><text transform="translate(73.03 0) scale(0.76 1)" text-anchor="middle">3</text></g>
<g transform="translate(1469.60 815.90)"><text transform="translate(2.71 0) scale(0.64 1)" text-anchor="middle">C</text><text transform="translate(8.12 0) scale(0.64 1)" text-anchor="middle">O</text><text transform="translate(13.53 0) scale(0.64 1)" text-anchor="middle">N</text><text transform="translate(18.94 0) scale(0.7 1)" text-anchor="middle">T</text><text transform="translate(24.34 0) scale(0.8 1)" text-anchor="middle">.</text></g>
<g transform="translate(1469.60 828.60)"><text transform="translate(2.71 0) scale(0.76 1)" text-anchor="middle">2</text><text transform="translate(8.12 0) scale(0.76 1)" text-anchor="middle">0</text><text transform="translate(13.53 0) scale(0.76 1)" text-anchor="middle">5</text><text transform="translate(18.94 0) scale(0.76 1)" text-anchor="middle">0</text><text transform="translate(24.34 0) scale(0.8 1)" text-anchor="middle">&#8211;</text><text transform="translate(29.76 0) scale(0.7 1)" text-anchor="middle">L</text><text transform="translate(35.16 0) scale(0.64 1)" text-anchor="middle">S</text><text transform="translate(40.58 0) scale(0.8 1)" text-anchor="middle">&#8211;</text><text transform="translate(45.98 0) scale(0.64 1)" text-anchor="middle">U</text><text transform="translate(51.39 0) scale(0.64 1)" text-anchor="middle">S</text><text transform="translate(56.80 0) scale(0.76 1)" text-anchor="middle">0</text><text transform="translate(62.22 0) scale(0.76 1)" text-anchor="middle">0</text><text transform="translate(67.62 0) scale(0.76 1)" text-anchor="middle">0</text><text transform="translate(73.03 0) scale(0.76 1)" text-anchor="middle">3</text><text transform="translate(83.86 0) scale(0.64 1)" text-anchor="middle">S</text><text transform="translate(89.27 0) scale(0.64 1)" text-anchor="middle">H</text><text transform="translate(94.67 0) scale(0.7 1)" text-anchor="middle">T</text><text transform="translate(105.50 0) scale(0.76 1)" text-anchor="middle">2</text></g>
<g transform="translate(1469.60 841.80)"><text transform="translate(2.71 0) scale(0.7 1)" text-anchor="middle">E</text><text transform="translate(13.53 0) scale(0.76 1)" text-anchor="middle">7</text><text transform="translate(18.94 0) scale(0.76 1)" text-anchor="middle">0</text><text transform="translate(24.34 0) scale(0.76 1)" text-anchor="middle">1</text><text transform="translate(29.76 0) scale(0.76 1)" text-anchor="middle">9</text><text transform="translate(35.16 0) scale(0.76 1)" text-anchor="middle">9</text><text transform="translate(40.58 0) scale(0.76 1)" text-anchor="middle">8</text><text transform="translate(45.98 0) scale(0.76 1)" text-anchor="middle">1</text></g>
<g transform="translate(1469.60 854.60)"><text transform="translate(2.71 0) scale(0.64 1)" text-anchor="middle">N</text><text transform="translate(13.53 0) scale(0.76 1)" text-anchor="middle">5</text><text transform="translate(18.94 0) scale(0.76 1)" text-anchor="middle">9</text><text transform="translate(24.34 0) scale(0.76 1)" text-anchor="middle">4</text><text transform="translate(29.76 0) scale(0.76 1)" text-anchor="middle">2</text><text transform="translate(35.16 0) scale(0.76 1)" text-anchor="middle">0</text><text transform="translate(40.58 0) scale(0.76 1)" text-anchor="middle">1</text><text transform="translate(45.98 0) scale(0.76 1)" text-anchor="middle">9</text></g>
<g transform="translate(1469.60 866.80)"><text transform="translate(2.71 0) scale(0.7 1)" text-anchor="middle">E</text><text transform="translate(8.12 0) scale(0.7 1)" text-anchor="middle">L</text><text transform="translate(18.94 0) scale(0.8 1)" text-anchor="middle">+</text><text transform="translate(24.34 0) scale(0.76 1)" text-anchor="middle">1</text><text transform="translate(29.76 0) scale(0.76 1)" text-anchor="middle">5</text><text transform="translate(35.16 0) scale(0.76 1)" text-anchor="middle">1</text><text transform="translate(40.58 0) scale(0.76 1)" text-anchor="middle">3</text></g>
<g transform="translate(939.00 308.70)"><text transform="translate(2.71 0) scale(0.8 1)" text-anchor="middle">&lt;</text><text transform="translate(8.12 0) scale(0.76 1)" text-anchor="middle">1</text><text transform="translate(13.53 0) scale(0.8 1)" text-anchor="middle">&gt;</text></g>
<g transform="translate(965.69 308.70)"><text transform="translate(2.71 0) scale(0.76 1)" text-anchor="middle">1</text></g>
<g transform="translate(853.79 352.70)"><text transform="translate(2.71 0) scale(0.76 1)" text-anchor="middle">2</text></g>
<g transform="translate(1456.80 680.50)"><text transform="translate(2.71 0) scale(0.76 1)" text-anchor="middle">3</text></g>
<g transform="translate(871.00 262.40) rotate(-90)"><text transform="translate(-8.12 0) scale(0.64 1)" text-anchor="middle">D</text><text transform="translate(-2.71 0) scale(0.64 1)" text-anchor="middle">N</text><text transform="translate(2.71 0) scale(0.76 1)" text-anchor="middle">2</text><text transform="translate(8.12 0) scale(0.76 1)" text-anchor="middle">0</text></g>
<g transform="translate(847.70 314.50) rotate(-90)"><text transform="translate(-5.41 0) scale(0.76 1)" text-anchor="middle">2</text><text transform="translate(0.00 0) scale(0.76 1)" text-anchor="middle">6</text><text transform="translate(5.41 0) scale(0.76 1)" text-anchor="middle">1</text></g>
<g transform="translate(1469.60 726.00) rotate(90)"><text transform="translate(-5.41 0) scale(0.76 1)" text-anchor="middle">3</text><text transform="translate(0.00 0) scale(0.76 1)" text-anchor="middle">2</text><text transform="translate(5.41 0) scale(0.76 1)" text-anchor="middle">7</text></g>
<g transform="translate(1420.80 780.50) rotate(90)"><text transform="translate(-8.12 0) scale(0.64 1)" text-anchor="middle">D</text><text transform="translate(-2.71 0) scale(0.64 1)" text-anchor="middle">N</text><text transform="translate(2.71 0) scale(0.76 1)" text-anchor="middle">2</text><text transform="translate(8.12 0) scale(0.76 1)" text-anchor="middle">0</text></g>
<g transform="translate(1446.20 776.00) rotate(90)"><text transform="translate(-5.41 0) scale(0.8 1)" text-anchor="middle">&lt;</text><text transform="translate(0.00 0) scale(0.76 1)" text-anchor="middle">3</text><text transform="translate(5.41 0) scale(0.8 1)" text-anchor="middle">&gt;</text></g>
<g transform="translate(1371.45 600.00) rotate(30)"><text transform="translate(-5.41 0) scale(0.76 1)" text-anchor="middle">6</text><text transform="translate(0.00 0) scale(0.76 1)" text-anchor="middle">1</text><text transform="translate(5.41 0) scale(0.76 1)" text-anchor="middle">9</text></g>
<g transform="translate(1323.75 598.20) rotate(30)"><text transform="translate(-5.41 0) scale(0.8 1)" text-anchor="middle">&lt;</text><text transform="translate(0.00 0) scale(0.76 1)" text-anchor="middle">2</text><text transform="translate(5.41 0) scale(0.8 1)" text-anchor="middle">&gt;</text></g>
<g transform="translate(1338.25 692.80) rotate(-30)"><text transform="translate(-5.41 0) scale(0.76 1)" text-anchor="middle">2</text><text transform="translate(0.00 0) scale(0.76 1)" text-anchor="middle">3</text><text transform="translate(5.41 0) scale(0.76 1)" text-anchor="middle">1</text></g>
<g transform="translate(1335.15 808.40) rotate(30)"><text transform="translate(-5.41 0) scale(0.76 1)" text-anchor="middle">2</text><text transform="translate(0.00 0) scale(0.76 1)" text-anchor="middle">3</text><text transform="translate(5.41 0) scale(0.76 1)" text-anchor="middle">1</text></g>
<g transform="translate(1344.2 606.1) rotate(30)"><rect x="-7" y="-5.8" width="14" height="11.6" fill="none" stroke="#000" stroke-width="1.1"/><text x="0" y="3.9" text-anchor="middle" transform="scale(0.76 1)">1</text></g>
<g transform="translate(1449.4 796.6) rotate(90)"><rect x="-7" y="-6.2" width="14" height="12.4" fill="none" stroke="#000" stroke-width="1.1"/><text x="0" y="3.9" text-anchor="middle" transform="scale(0.76 1)">1</text></g>
</g>
</svg>

<div class="a" style="left:754.5px;top:398.5px;width:412px;height:206px;border-radius:7px;background:#f0f0f0;border:1px solid #a6a6a6;box-shadow:0 16px 50px rgba(0,0,0,0.38),0 0 3px rgba(0,0,0,0.08);overflow:hidden">
<div class="a" style="left:0;top:0;width:412px;height:30px;background:#eef2f8"></div>
</div>
<div class="a" style="left:763px;top:405px;width:16px;height:16px;border-radius:3px;background:linear-gradient(#e27a12,#bf5f0b);border:1px solid #8c8c8c"></div>
<svg class="a" style="left:763px;top:405px" width="16" height="16" viewBox="0 0 16 16"><text x="8" y="13" text-anchor="middle" font-family="Liberation Sans,sans-serif" font-weight="bold" font-size="10" textLength="10.5" lengthAdjust="spacingAndGlyphs" fill="#f0dcc8">PDF</text></svg>
<div class="a" style="left:785px;top:405px;font-size:12px;line-height:15px;color:#111;white-space:nowrap">删除页面</div>
<svg class="a" style="left:1140px;top:403px" width="22" height="20" viewBox="1140 403 22 20"><path d="M1146 408.3 L1155.7 418 M1155.7 408.3 L1146 418" stroke="#222" stroke-width="1.1"/></svg>
<div class="a" style="left:775.5px;top:457.4px;width:370.5px;height:75.5px;border:1px solid #dadada"></div>
<div class="a" style="left:782.5px;top:450px;width:28.5px;height:14px;background:#f0f0f0"></div>
<div class="a" style="left:785px;top:450.5px;font-size:12px;line-height:15px;color:#111;white-space:nowrap">范围</div>
<svg class="a" style="left:780px;top:470px" width="230" height="60" viewBox="780 470 230 60">
<circle cx="791.5" cy="486.4" r="6" fill="#fff" stroke="#555" stroke-width="1"/>
<circle cx="791.5" cy="513.5" r="6.7" fill="#0a5fc0"/>
<circle cx="791.5" cy="513.5" r="2.7" fill="#fff"/>
<rect x="866.8" y="477.2" width="48.4" height="19" fill="none" stroke="#e3e3e3" stroke-width="1"/>
<rect x="900.4" y="478.4" width="12.8" height="15.2" fill="none" stroke="#e6e6e6" stroke-width="0.8"/>
<path d="M903.6 484.8 L906.6 481.6 L909.6 484.8 Z M903.6 487.6 L906.6 490.8 L909.6 487.6 Z" fill="#a8a8a8"/>
<circle cx="987" cy="513.7" r="6.3" fill="none" stroke="#2d9be6" stroke-width="1.1"/>
<path d="M987 511.6 V517.5 M985.6 517.5 H988.4 M985.8 511.6 H987" stroke="#2d9be6" stroke-width="1"/>
<circle cx="987" cy="509.4" r="0.8" fill="#2d9be6"/>
</svg>
<div class="a" style="left:804px;top:480px;font-size:12px;line-height:15px;color:#111;white-space:nowrap">页码<span style="margin-left:2.5px">:</span></div>
<div class="a" style="left:844px;top:480px;font-size:12px;line-height:15px;color:#111;white-space:nowrap">第</div>
<div class="a" style="left:879.5px;top:480px;font-size:12px;line-height:15px;color:#9a9a9a;white-space:nowrap">1</div>
<div class="a" style="left:922px;top:480px;font-size:12px;line-height:15px;color:#111;white-space:nowrap">页</div><div class="a" style="left:945px;top:480px;font-size:12px;line-height:15px;color:#111;white-space:nowrap;letter-spacing:0.3px">(共 283 页)</div>
<div class="a" style="left:804px;top:507px;font-size:12px;line-height:15px;color:#111;white-space:nowrap">页码范围<span style="margin-left:2.5px">:</span></div>
<div class="a" style="left:874px;top:503.2px;width:100px;height:20.6px;background:#fff;border:1.5px solid #1f7dd4;border-radius:3px"></div>
<div class="a" style="left:877.6px;top:507px;font-size:12px;line-height:15px;color:#111;white-space:nowrap;letter-spacing:0.35px">190-199</div>
<div class="a" style="left:924px;top:505.5px;width:1.2px;height:16.5px;background:#111"></div>
<div class="a" style="left:1001px;top:507px;font-size:12px;line-height:15px;color:#111;white-space:nowrap">范例<span style="margin-left:2.5px;margin-right:6px">:</span><span style="letter-spacing:0.35px">1,4-5,8</span></div>
<div class="a" style="left:1067.3px;top:550.4px;width:77.4px;height:32.2px;background:#fdfdfd;border:1px solid #1a73d0;border-radius:4px"></div>
<div class="a" style="left:1067.3px;top:559px;width:77.4px;text-align:center;font-size:12px;line-height:15px;color:#111">删除</div>

<div class="a" style="left:4px;top:1008px;font-size:12px;line-height:16px;color:#e4e4e4;white-space:nowrap">页面大小: <span style="letter-spacing:0.45px">32.62×27.71</span> 厘米</div>
<div class="a" style="left:170px;top:1008px;font-size:12px;line-height:16px;color:#e4e4e4;white-space:nowrap">当前页未设置测量比例</div>
<div class="a" style="left:920px;top:1005px;width:40px;height:20.5px;background:#fff;border-radius:2.5px"></div>
<div class="a" style="left:920px;top:1008px;width:40px;text-align:center;font-size:12px;line-height:16px;color:#222">1</div>
<div class="a" style="left:966.5px;top:1008px;font-size:12.5px;line-height:16px;color:#e4e4e4;white-space:nowrap">/</div><div class="a" style="left:978.8px;top:1008px;font-size:12.5px;line-height:16px;color:#e4e4e4;white-space:nowrap;letter-spacing:0.4px">283</div>
<div class="a" style="left:1436px;top:1008px;font-size:12px;line-height:16px;font-weight:bold;color:#e8e8e8;white-space:nowrap">标注分类</div>
<div class="a" style="left:1498px;top:1006px;width:150px;height:20px;background:#474747;border:1px solid #a9a9a9"></div>
<div class="a" style="left:1502px;top:1008.5px;width:16px;height:15px;background:#ff0000;border:1px solid #5a1a1a"></div>
<div class="a" style="left:1524px;top:1008px;font-size:12px;line-height:16px;color:#e4e4e4;white-space:nowrap">未分类</div>
<div class="a" style="left:1692px;top:1002px;width:23px;height:27.5px;background:#5a5a5a;border-radius:2px"></div>
<div class="a" style="left:1849px;top:1009px;font-size:12.5px;line-height:16px;color:#e4e4e4;white-space:nowrap">75%</div>
<svg class="a" style="left:0;top:998px" width="1920" height="33" viewBox="0 998 1920 33" fill="none" stroke="#e6e6e6" stroke-width="1.2" stroke-linejoin="round" stroke-linecap="round">
<path d="M161.5 1001 V1031 M295.5 1001 V1031 M1654.6 1001 V1031 M1683.5 1001 V1031 M1745.6 1001 V1031 M1807.5 1001 V1031" stroke="#d8d8d8" stroke-width="1.3" stroke-linecap="butt"/>
<path d="M908.5 1009.5 L901.7 1015.4 L908.5 1021.3 M1009.7 1009.5 L1016.3 1015.4 L1009.7 1021.3" stroke-width="1.1"/>
<g stroke="#d8d8d8" stroke-width="1.1"><rect x="1418" y="1010.5" width="5" height="5" rx="1"/><rect x="1425" y="1010.5" width="5" height="5" rx="1"/><rect x="1418" y="1017" width="5" height="5" rx="1"/><circle cx="1427.5" cy="1019.5" r="2.5"/></g>
<path d="M1635 1014.2 H1643.2 L1639.1 1018.8 Z" fill="#fff" stroke="none"/>
<path d="M1663.3 1016.1 Q1670 1008.5 1676.6 1016.1 Q1670 1023.7 1663.3 1016.1 Z" stroke-width="1.1"/>
<circle cx="1670" cy="1016.1" r="2" stroke-width="1.1"/>
<path d="M1700 1016 V1011 Q1700 1009.8 1701.2 1009.8 Q1702.3 1009.8 1702.3 1011 V1015 M1702.3 1011 V1009.5 Q1702.3 1008.5 1703.4 1008.5 Q1704.5 1008.5 1704.5 1009.5 V1015 M1704.5 1010 Q1704.5 1009 1705.6 1009 Q1706.7 1009 1706.7 1010 V1015 M1706.7 1011.2 Q1706.7 1010.3 1707.8 1010.3 Q1708.9 1010.3 1708.9 1011.2 V1017 Q1708.9 1022.3 1703.5 1022.3 Q1698.5 1022.3 1697 1018.5 L1696.5 1016.3 Q1696.8 1015 1698 1015.3 L1700 1016.5" stroke-width="1.1"/>
<path d="M1727 1021.7 H1722.6 Q1721.5 1021.7 1721.5 1020.6 V1010.5 Q1721.5 1009.4 1722.6 1009.4 H1732 Q1733.2 1009.4 1733.2 1010.5 V1014.5 M1730.3 1016.5 V1023 M1727 1019.7 H1733.5" stroke-width="1.2"/>
<g stroke-width="1.1"><path d="M1759.3 1010.3 H1764.3 V1022.8 H1759.3 Z M1766.3 1010.3 H1771.2 V1022.8 H1766.3 Z M1760.5 1013 H1763 M1760.5 1015.5 H1763 M1760.5 1018 H1763 M1760.5 1020.5 H1763 M1767.5 1013 H1770 M1767.5 1015.5 H1770 M1767.5 1018 H1770 M1767.5 1020.5 H1770"/></g>
<g stroke-width="1.1"><path d="M1784 1010 V1012.3 H1796 V1010 M1784 1023 V1020.8 H1796 V1023 M1784.5 1014 H1795.5 M1784.5 1016.5 H1795.5 M1784.5 1019 H1795.5"/></g>
<path d="M1825.3 1017.3 H1830.5" stroke-width="1.6" stroke-linecap="butt"/>
<path d="M1894.8 1017.2 H1904.6 M1899.7 1012.3 V1022.1" stroke="#f2f2f2" stroke-width="1.8" stroke-linecap="butt"/>
</svg>
</body></html>
